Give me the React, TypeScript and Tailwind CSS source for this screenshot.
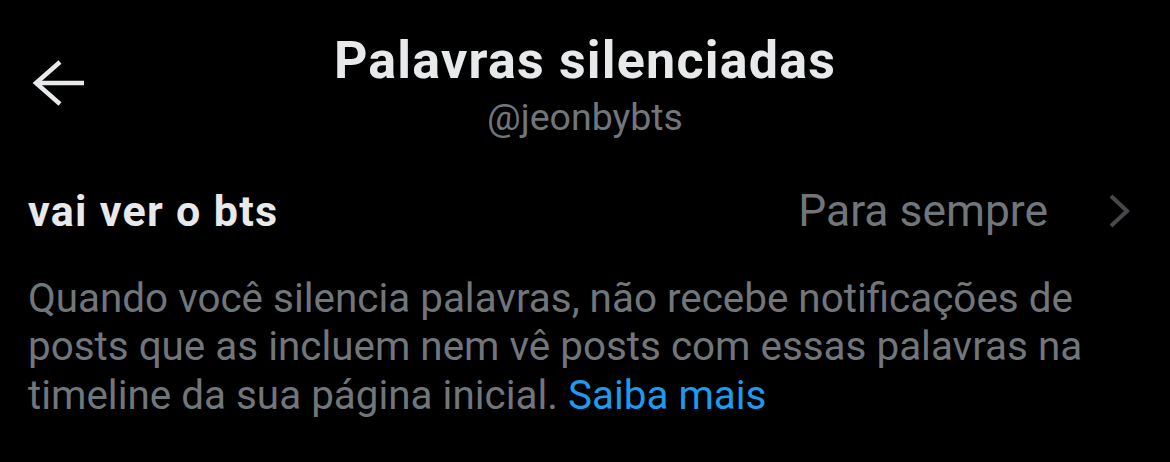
export default function App() {
  return (
    <div className="h-[462px] w-[1170px] overflow-hidden bg-black font-['Roboto',sans-serif]">
      <header className="relative flex flex-col items-center pt-[35px]">
        <button className="absolute left-[30px] top-[55px] text-[#e7e9ea]">
          <svg width="60" height="56" viewBox="0 0 60 56" fill="none" stroke="currentColor" strokeWidth="4.5">
            <path d="M54 28H6" />
            <path d="M30 7L6 28l24 21" />
          </svg>
        </button>
        <h1 className="text-[52px] font-bold leading-[52px] tracking-[1.2px] text-[#e7e9ea]">
          Palavras silenciadas
        </h1>
        <p className="mt-[12px] text-[37.5px] leading-[37.5px] text-[#71767b]">@jeonbybts</p>
      </header>

      <div className="mt-[52px] flex h-[45px] items-center justify-between pl-[28px] pr-[38px]">
        <span className="text-[43px] font-bold leading-[43px] tracking-[1.3px] text-[#e7e9ea]">
          vai ver o bts
        </span>
        <div className="flex items-center gap-[60px]">
          <span className="text-[44.4px] leading-[45px] text-[#71767b]">Para sempre</span>
          <svg width="24" height="34" viewBox="0 0 24 34" fill="none" stroke="#46494c" strokeWidth="4">
            <path d="M3 2l16 15L3 32" />
          </svg>
        </div>
      </div>

      <p className="mt-[41px] pl-[28px] text-[40.4px] leading-[48.5px] text-[#71767b]">
        Quando você silencia palavras, não recebe notificações de
        <br />
        posts que as incluem nem vê posts com essas palavras na
        <br />
        timeline da sua página inicial. <a className="text-[#1d9bf0]">Saiba mais</a>
      </p>
    </div>
  );
}
